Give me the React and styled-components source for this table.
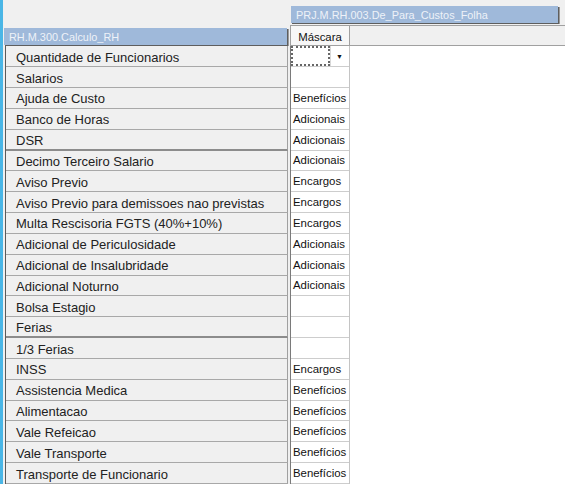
import { createGlobalStyle, styled } from "styled-components";

const rows = [
  { label: "Quantidade de Funcionarios", combo: true },
  { label: "Salarios", value: "" },
  { label: "Ajuda de Custo", value: "Benefícios" },
  { label: "Banco de Horas", value: "Adicionais" },
  { label: "DSR", value: "Adicionais", thick: true },
  { label: "Decimo Terceiro Salario", value: "Adicionais" },
  { label: "Aviso Previo", value: "Encargos" },
  { label: "Aviso Previo para demissoes nao previstas", value: "Encargos" },
  { label: "Multa Rescisoria FGTS (40%+10%)", value: "Encargos" },
  { label: "Adicional de Periculosidade", value: "Adicionais" },
  { label: "Adicional de Insalubridade", value: "Adicionais" },
  { label: "Adicional Noturno", value: "Adicionais" },
  { label: "Bolsa Estagio", value: "" },
  { label: "Ferias", value: "", thick: true },
  { label: "1/3 Ferias", value: "" },
  { label: "INSS", value: "Encargos" },
  { label: "Assistencia Medica", value: "Benefícios" },
  { label: "Alimentacao", value: "Benefícios" },
  { label: "Vale Refeicao", value: "Benefícios" },
  { label: "Vale Transporte", value: "Benefícios" },
  { label: "Transporte de Funcionario", value: "Benefícios" },
];

const App = () => {
  return (
    <>
      <GlobalStyle />
      <Page>
        <LeftPane>
          <PanelTitle width="283px">RH.M.300.Calculo_RH</PanelTitle>
          <LabelList>
            {rows.map((r) => (
              <LabelRow key={r.label} thick={r.thick}>{r.label}</LabelRow>
            ))}
          </LabelList>
        </LeftPane>
        <RightPane>
          <PanelTitle width="267px">PRJ.M.RH.003.De_Para_Custos_Folha</PanelTitle>
          <ColumnHeaderRow>
            <ColumnHeader>Máscara</ColumnHeader>
          </ColumnHeaderRow>
          <Body>
            <ValueColumn>
              {rows.map((r) => (
                <ValueCell key={r.label}>
                  {r.combo ? (
                    <Combo>
                      <ComboField />
                      <ComboButton>▼</ComboButton>
                    </Combo>
                  ) : (
                    r.value
                  )}
                </ValueCell>
              ))}
            </ValueColumn>
          </Body>
        </RightPane>
      </Page>
    </>
  );
};

const GlobalStyle = createGlobalStyle`
  html, body {
    margin: 0;
    padding: 0;
    background: #f0f0f0;
  }
  * {
    box-sizing: border-box;
  }
`;

const Page = styled.div`
  width: 565px;
  height: 484px;
  overflow: hidden;
  display: flex;
  border-left: 3px solid #4ab6e6;
  background: #f0f0f0;
  font-family: "Liberation Sans", Arial, sans-serif;
`;

const LeftPane = styled.div`
  width: 287px;
  flex: none;
  padding-top: 28px;
  display: flex;
  flex-direction: column;
`;

const PanelTitle = styled.div`
  width: ${(p) => p.width};
  height: 18px;
  margin-left: 1px;
  margin-bottom: 1px;
  padding-left: 5px;
  padding-top: 1px;
  display: flex;
  align-items: center;
  background: #9fb9da;
  box-shadow: 1px 1px 0 #5e5e5e, 2px 1px 0 #9a9a9a;
  color: #eef2f8;
  font-size: 10.9px;
  white-space: nowrap;
`;

const LabelList = styled.div`
  margin-left: 2px;
  margin-right: 2px;
  border-left: 1px solid #5a5a5a;
  display: flex;
  flex-direction: column;
`;

const LabelRow = styled.div`
  height: 20.85px;
  flex: none;
  padding-left: 10px;
  padding-top: 2px;
  display: flex;
  align-items: center;
  background: #f0f0f0;
  border-right: 1px solid #a0a0a0;
  border-bottom: ${(p) => (p.thick ? "2px solid #8c8c8c" : "1px solid #a8a8a8")};
  color: #222;
  font-size: 13px;
  white-space: nowrap;
`;

const RightPane = styled.div`
  flex: 1;
  padding-top: 6px;
  display: flex;
  flex-direction: column;
  min-width: 0;
`;

const ColumnHeaderRow = styled.div`
  margin-top: 1px;
  height: 21px;
  flex: none;
  display: flex;
  border-top: 1px solid #a0a0a0;
  border-bottom: 1px solid #a0a0a0;
`;

const ColumnHeader = styled.div`
  width: 60px;
  padding-top: 2px;
  display: flex;
  align-items: center;
  justify-content: center;
  background: #f7f7f7;
  border-left: 1px solid #a0a0a0;
  border-right: 1px solid #a0a0a0;
  color: #111;
  font-size: 11.4px;
`;

const Body = styled.div`
  flex: 1;
  background: #ffffff;
  display: flex;
`;

const ValueColumn = styled.div`
  width: 60px;
  display: flex;
  flex-direction: column;
  border-left: 1px solid #7a7a7a;
  border-right: 1px solid #c4c4c4;
`;

const ValueCell = styled.div`
  height: 20.85px;
  flex: none;
  padding-left: 2px;
  display: flex;
  align-items: center;
  border-bottom: 1px solid #cdcdcd;
  color: #111;
  font-size: 11.4px;
  white-space: nowrap;
`;

const Combo = styled.div`
  display: flex;
  width: 57px;
  height: 20px;
  margin-left: -2px;
`;

const ComboField = styled.div`
  width: 39px;
  height: 100%;
  border: 2px dotted #666;
  background: #fff;
`;

const ComboButton = styled.div`
  flex: 1;
  display: flex;
  align-items: center;
  justify-content: center;
  border-left: 1px solid #d8d8d8;
  font-size: 7px;
  color: #111;
`;

export default App;
